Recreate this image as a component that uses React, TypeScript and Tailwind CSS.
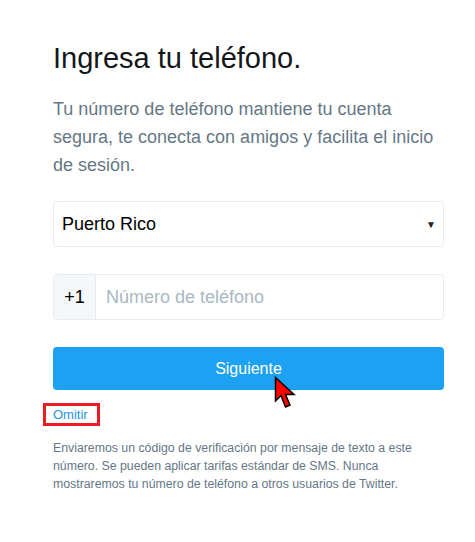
import React from "react";

export default function App() {
  return (
    <div
      className="relative w-[475px] h-[542px] bg-white"
      style={{ fontFamily: '"Liberation Sans", Arial, sans-serif' }}
    >
      <div className="pl-[53px] pr-[31px] pt-[40px]">
        <h1 className="text-[29px] leading-[36px] text-[#14171a]">Ingresa tu teléfono.</h1>
        <p className="mt-[19px] text-[18px] leading-[28px] text-[#657786]">
          Tu número de teléfono mantiene tu cuenta segura, te conecta con amigos y facilita el inicio de sesión.
        </p>
        <div className="mt-[22px] h-[46px] rounded-[4px] border border-[#e6ecf0] flex items-center justify-between pl-[8px] pr-[7px]">
          <span className="text-[18px] text-black">Puerto Rico</span>
          <span className="text-[10px] text-[#222]">▼</span>
        </div>
        <div className="mt-[27px] h-[46px] rounded-[4px] border border-[#e6ecf0] flex">
          <div className="w-[42px] bg-[#f5f8fa] border-r border-[#e6ecf0] rounded-l-[4px] flex items-center justify-center text-[18px] text-black">
            +1
          </div>
          <div className="flex items-center pl-[10px] text-[18px] text-[#aab8c2]">Número de teléfono</div>
        </div>
        <div className="mt-[27px] h-[43px] rounded-[4px] bg-[#1da1f2] flex items-center justify-center text-[16px] text-white">
          Siguiente
        </div>
        <div className="mt-[13px] ml-[-10px] w-[57px] h-[23px] border-[3px] border-[#ed1c24] flex items-center pl-[7px] text-[13px] text-[#1b95e0]">
          Omitir
        </div>
        <p className="mt-[13px] text-[12.3px] leading-[18px] text-[#657786]">
          Enviaremos un código de verificación por mensaje de texto a este número. Se pueden aplicar tarifas estándar de SMS. Nunca mostraremos tu número de teléfono a otros usuarios de Twitter.
        </p>
      </div>
      <svg
        className="absolute left-[274px] top-[376px]"
        width="26"
        height="34"
        viewBox="0 0 26 34"
      >
        <path
          d="M1.5 1.5 L1.5 25 L7 19.5 L11.5 31 L16 29 L11.5 18.5 L20 18.5 Z"
          fill="#ff0000"
          stroke="#000"
          strokeWidth="1.5"
          strokeLinejoin="miter"
        />
      </svg>
    </div>
  );
}
